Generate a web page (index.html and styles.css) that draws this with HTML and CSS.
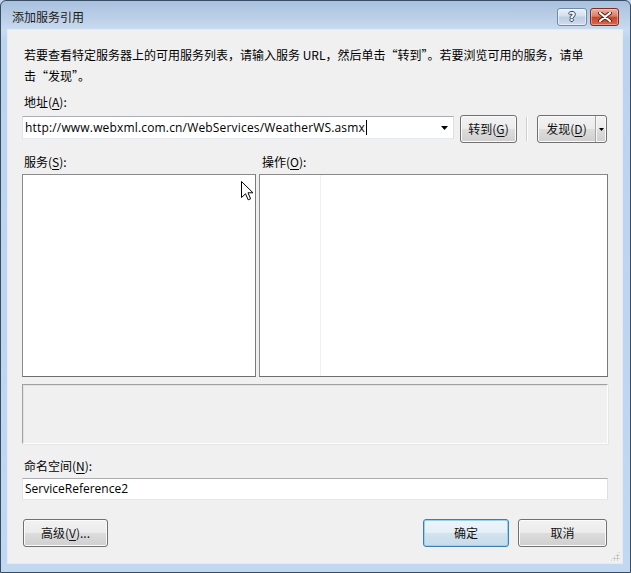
FILE: index.html
```html
<!DOCTYPE html>
<html lang="zh-CN">
<head>
<meta charset="utf-8">
<title>添加服务引用</title>
<link rel="stylesheet" href="styles.css">
</head>
<body>
<div class="window">
  <div class="titlebar">
    <span class="title">添加服务引用</span>
    <div class="caption-buttons">
      <span class="cap help">?</span>
      <span class="cap close">
        <svg width="14" height="10" viewBox="0 0 14 10"><path d="M2 1 L12 9 M12 1 L2 9" stroke="#5a1a10" stroke-width="4" stroke-linecap="round"/><path d="M2 1 L12 9 M12 1 L2 9" stroke="#ffffff" stroke-width="2.2" stroke-linecap="round"/></svg>
      </span>
    </div>
  </div>
  <div class="client">
    <p class="intro">若要查看特定服务器上的可用服务列表，请输入服务 URL，然后单击“转到”。若要浏览可用的服务，请单击“发现”。</p>
    <div class="label addr-label">地址(<u>A</u>):</div>
    <div class="addr-row">
      <div class="combo">
        <span class="combo-text latin">http://www.webxml.com.cn/WebServices/WeatherWS.asmx<span class="caret"></span></span>
        <span class="combo-arrow"><svg width="7" height="4" viewBox="0 0 7 4"><path d="M0 0 H7 L3.5 4 Z" fill="#000"/></svg></span>
      </div>
      <button class="btn go">转到(<u>G</u>)</button>
      <span class="vsep"></span>
      <div class="btn split">
        <span class="split-main">发现(<u>D</u>)</span>
        <span class="split-arrow"><svg width="5" height="3" viewBox="0 0 5 3"><path d="M0 0 H5 L2.5 3 Z" fill="#000"/></svg></span>
      </div>
    </div>
    <div class="lists">
      <div class="col services">
        <div class="label">服务(<u>S</u>):</div>
        <div class="listbox">
          <svg class="cursor" width="13" height="20" viewBox="0 0 13 20"><path d="M0.5 0.5 L0.5 16.5 L4.5 12.8 L7.2 18.8 L9.6 17.8 L7 11.8 L12 11.8 Z" fill="#fff" stroke="#000" stroke-width="1" stroke-linejoin="miter"/></svg>
        </div>
      </div>
      <div class="col ops">
        <div class="label">操作(<u>O</u>):</div>
        <div class="listbox oplist"><span class="colline"></span></div>
      </div>
    </div>
    <div class="desc"></div>
    <div class="label ns-label">命名空间(<u>N</u>):</div>
    <div class="textbox latin">ServiceReference2</div>
    <div class="buttons">
      <button class="btn adv">高级(<u>V</u>)...</button>
      <span class="spacer"></span>
      <button class="btn ok">确定</button>
      <button class="btn cancel">取消</button>
    </div>
    <span class="grip"></span>
  </div>
</div>
</body>
</html>
```

FILE: styles.css
```css
* { box-sizing: border-box; }
html, body { margin: 0; padding: 0; }
body {
  width: 631px;
  height: 573px;
  overflow: hidden;
  background: #c4d7ee;
  font-family: "Noto Sans CJK SC", sans-serif;
  font-size: 12px;
  color: #000;
}
.latin { font-family: "Open Sans", "Noto Sans CJK SC", sans-serif; }

.window {
  width: 631px;
  height: 573px;
  border: 1px solid #384c66;
  border-radius: 6px 6px 0 0;
  background: linear-gradient(to bottom, #a9c1de 0px, #bcd0e8 18px, #c9dbf0 29px, #bcd3ee 40px, #c2d7f0 100%);
  padding: 0 8px 9px 7px;
  display: flex;
  flex-direction: column;
}

.titlebar {
  height: 29px;
  padding: 3px 3px 0 4px;
  display: flex;
  align-items: center;
  justify-content: space-between;
}
.title { color: #1b1b1b; font-size: 12px; line-height: 16px; }
.caption-buttons { display: flex; gap: 3px; }
.cap {
  height: 18px;
  border-radius: 3px;
  display: flex;
  align-items: center;
  justify-content: center;
}
.help {
  width: 30px;
  border: 1px solid #7189a8;
  background: linear-gradient(to bottom, #e9f0f8 0%, #d3dfee 45%, #bccde3 50%, #cfdcec 100%);
  box-shadow: inset 0 0 0 1px rgba(255,255,255,0.5);
  color: #fff;
  font-family: "DejaVu Sans", sans-serif;
  font-weight: bold;
  font-size: 12px;
  text-shadow: 1px 0 0 #2e4460, -1px 0 0 #2e4460, 0 1px 0 #2e4460, 0 -1px 0 #2e4460;
}
.close {
  width: 29px;
  border: 1px solid #7a2d22;
  background: linear-gradient(to bottom, #eab1a3 0%, #dc7d66 45%, #c9442a 52%, #d8694c 100%);
  box-shadow: inset 0 0 0 1px rgba(255,220,210,0.45);
}

.client {
  flex: 1;
  position: relative;
  background: #f0f0f0;
  padding: 14px 14px 0 14px;
  display: flex;
  flex-direction: column;
  box-shadow: 0 0 0 1px #e2ebf6;
}

.intro {
  margin: 0;
  padding: 0 18px 0 2px;
  line-height: 21px;
}
.label {
  line-height: 20px;
  padding-left: 2px;
}
.label u, .btn u { text-underline-offset: 2px; }
.addr-label { margin-top: 6px; }

.addr-row {
  margin-top: 3px;
  height: 28px;
  display: flex;
  align-items: flex-start;
}
.combo {
  width: 432px;
  height: 23px;
  margin-top: 1px;
  background: #fff;
  border: 1px solid;
  border-color: #abadb3 #dbdfe6 #e3e9ef #e2e3ea;
  display: flex;
  align-items: center;
}
.combo-text {
  flex: 1;
  padding-left: 2px;
  line-height: 18px;
  letter-spacing: 0.17px;
  white-space: nowrap;
  display: flex;
  align-items: center;
}
.caret {
  display: inline-block;
  width: 1px;
  height: 15px;
  background: #000;
  margin-left: 1px;
}
.combo-arrow {
  width: 17px;
  height: 21px;
  display: flex;
  align-items: center;
  justify-content: center;
}

.btn {
  font-family: "Noto Sans CJK SC", sans-serif;
  font-size: 12px;
  color: #111;
  height: 28px;
  padding: 0;
  border: 1px solid #707070;
  border-radius: 3px;
  background: linear-gradient(to bottom, #f2f2f2 0%, #ebebeb 50%, #dddddd 50%, #cfcfcf 100%);
  box-shadow: inset 0 0 0 1px #fbfbfb;
  display: flex;
  align-items: center;
  justify-content: center;
  line-height: 16px;
}
.go { width: 57px; margin-left: 6px; }
.vsep {
  width: 2px;
  height: 24px;
  margin: 2px 0 0 9px;
  border-left: 1px solid #cfcfcf;
  border-right: 1px solid #fff;
}
.split {
  width: 70px;
  margin-left: 9px;
  justify-content: flex-start;
}
.split-main {
  width: 58px;
  height: 100%;
  display: flex;
  align-items: center;
  justify-content: center;
  border-right: 1px solid #a5a5a5;
}
.split-arrow {
  flex: 1;
  height: 100%;
  display: flex;
  align-items: center;
  justify-content: center;
  box-shadow: inset 1px 0 0 #f7f7f7;
}

.lists {
  margin-top: 9px;
  display: flex;
  gap: 3px;
}
.col { display: flex; flex-direction: column; }
.services { width: 234px; }
.ops { flex: 1; }
.ops .label { padding-left: 3px; }
.lists .label { margin-bottom: 2px; }
.listbox {
  position: relative;
  height: 203px;
  background: #fff;
  border: 1px solid;
  border-color: #8a8a8a #7a7a7a #6e6e6e #8a8a8a;
}
.cursor { position: absolute; left: 218px; top: 6px; }
.colline {
  position: absolute;
  left: 60px;
  top: 0;
  bottom: 0;
  width: 1px;
  background: #f1f1f1;
}

.desc {
  margin-top: 7px;
  height: 60px;
  border: 1px solid;
  border-color: #a0a0a0 #fdfdfd #fdfdfd #a0a0a0;
  box-shadow: inset 1px 1px 0 #e3e3e3, 1px 1px 0 #e6e6e6;
  background: #f0f0f0;
}

.ns-label { margin-top: 12px; }
.textbox {
  margin-top: 2px;
  height: 22px;
  background: #fff;
  border: 1px solid;
  border-color: #abadb3 #dbdfe6 #e3e9ef #e2e3ea;
  padding-left: 2px;
  line-height: 20px;
  white-space: nowrap;
}

.buttons {
  margin-top: 19px;
  display: flex;
  gap: 9px;
  padding: 0 1px;
}
.spacer { flex: 1; }
.adv { width: 85px; }
.ok {
  width: 86px;
  border-color: #3c7fb1;
  background: linear-gradient(to bottom, #eef5fa 0%, #e3eef6 50%, #d3e3ef 50%, #c7dbe9 100%);
  box-shadow: inset 0 0 0 1px #97d3f0;
}
.cancel { width: 89px; }

.grip {
  position: absolute;
  right: 2px;
  bottom: 2px;
  width: 10px;
  height: 10px;
  background:
    radial-gradient(circle, #b5b5b5 0.8px, transparent 1.2px) 0 0 / 3px 3px;
  clip-path: polygon(100% 0, 100% 100%, 0 100%);
}
```
